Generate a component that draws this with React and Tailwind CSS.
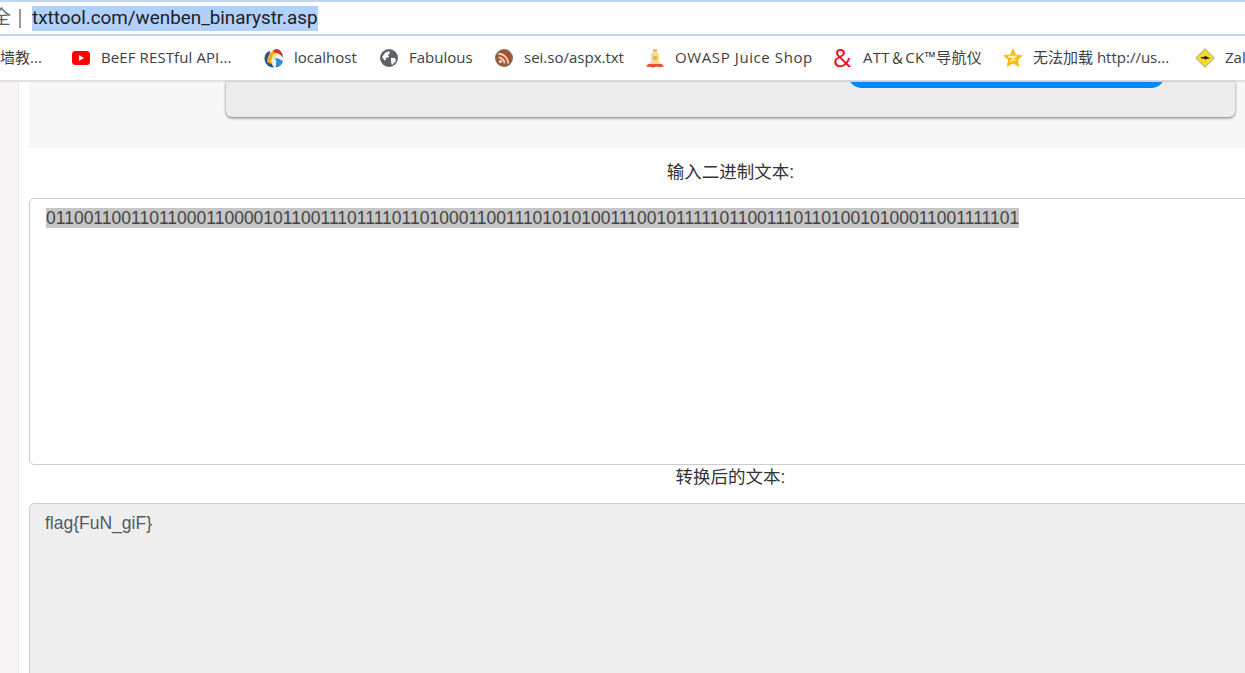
import { useMemo } from 'react'

function YoutubeIcon() {
  return (
    <svg width="18" height="14" viewBox="0 0 18 14">
      <rect width="18" height="14" rx="3.5" fill="#f00" />
      <path d="M7 4l5 3-5 3z" fill="#fff" />
    </svg>
  )
}

function SwirlIcon() {
  return (
    <svg width="20" height="20" viewBox="0 0 20 20">
      <circle cx="10" cy="10" r="9.5" fill="#eef1f4" />
      <path d="M.5 11C.5 7 2.500 4 6 3c-1 5 0 11 4 16.500-5 0-9-3.500-9.500-8.500z" fill="#23518f" />
      <path d="M3 14C3 9 6 4 10 2l2 3c-3 2-5 6-5 11z" fill="#f0a81e" />
      <path d="M9 3c1-1.500 3-2.500 5-1.800 3 1.300 5 4.800 5 8.300-2-2.500-5-4.500-7.500-4.500z" fill="#dd2f2a" />
      <path d="M8 9c0-1.500 1-3 2.500-3.500L13 8c-2 1-3 3-3 5z" fill="#f7e04a" />
      <path d="M11 10c3 0 6 1.500 8 3.500-1 3-4 6-7.500 6 1-3 1-6.500-.5-9.500z" fill="#2f8fdc" />
      <path d="M11 9.500c2.500 0 5 .8 7 2.500l.5-1.500c-2-2-4.500-3-6.500-3z" fill="#fff" />
    </svg>
  )
}

function GlobeIcon() {
  return (
    <svg width="18" height="18" viewBox="0 0 18 18">
      <circle cx="9" cy="9" r="9" fill="#5f6368" />
      <path d="M2 8l3-4 4-2 1 2-2 2 1 2-3 1-1 3-3-4zM11 9l4 0 1 3-4 4-1-3z" fill="#fff" />
    </svg>
  )
}

function RssIcon() {
  return (
    <svg width="18" height="18" viewBox="0 0 18 18">
      <circle cx="9" cy="9" r="9" fill="#7f6d55" />
      <circle cx="9" cy="9" r="7.2" fill="#ad4a28" />
      <circle cx="5.500" cy="12.500" r="1.700" fill="#ecd3b8" />
      <path d="M3.500 8.500a6 6 0 0 1 6 6M3.500 4.800a9.700 9.700 0 0 1 9.700 9.700" fill="none" stroke="#ecd3b8" strokeWidth="1.900" />
    </svg>
  )
}

function JuiceIcon() {
  return (
    <svg width="18" height="20" viewBox="0 0 18 20">
      <path d="M0 18.500c1-2 3-3 5-3h8c2 0 4 1 5 3l-5 .8-2-.8-3 1z" fill="#e2552b" />
      <path d="M5 6l2-1.500V1h4v3.500L13 6v10H5z" fill="#f5dc96" />
      <path d="M7 1h4v2.500H7z" fill="#e9bd55" />
      <path d="M7 8h4v4H7z" fill="#eab44c" />
    </svg>
  )
}

function StarIcon() {
  return (
    <svg width="20" height="20" viewBox="0 0 20 20">
      <path d="M10 0l3 6.500 7 .8-5 4.800 1.300 7L10 15.600 3.700 19 5 12.100 0 7.300l7-.8z" fill="#fdbd10" />
      <path d="M5.500 7.800h9l-4.500 3.700h4.500l-8.500 2.500 4.500-4h-5z" fill="#fff6d0" />
    </svg>
  )
}

function DiamondIcon() {
  return (
    <svg width="20" height="20" viewBox="0 0 20 20">
      <path d="M10 0l10 10-10 10L0 10z" fill="#c9c089" />
      <path d="M10 2l8 8-8 8-8-8z" fill="#f7dc1b" />
      <path d="M6 9h2.500l2-1 3 1.500 2 .5-2 .5-3 1-2-1H6z" fill="#222" />
    </svg>
  )
}

function Bookmark({ icon, label, className }) {
  return (
    <div className={`flex shrink-0 items-center ${className}`}>
      {icon}
      <span className="whitespace-nowrap">{label}</span>
    </div>
  )
}

function App() {
  const binaryText = useMemo(
    () =>
      [...'flag{FuN_giF}']
        .map((letter) => letter.charCodeAt(0).toString(2).padStart(8, '0'))
        .join(''),
    [],
  )

  return (
    <div className="flex h-[673px] w-[1245px] flex-col overflow-hidden bg-white font-['Liberation_Sans','Noto_Sans_CJK_SC',sans-serif]">
      {/* address bar */}
      <div className="flex h-9 shrink-0 items-center overflow-hidden border-y-2 border-[#bcd6f7] bg-white font-['Roboto','Noto_Sans_CJK_SC',sans-serif] text-[18.85px] text-[#202124]">
        <span className="ml-[-8px] w-[19px] shrink-0 text-[#5f6368]">全</span>
        <div className="ml-[8px] h-[19px] w-[2px] shrink-0 bg-[#9a9a9a]" />
        <span className="ml-[11px] flex h-[25px] items-center bg-[#b3d0fb] whitespace-nowrap">txttool.com/wenben_binarystr.asp</span>
      </div>

      {/* bookmarks */}
      <div className="flex h-[46px] shrink-0 items-center overflow-hidden border-b-2 border-[#dfdfe4] bg-white pb-[1px] font-['Open_Sans','Noto_Sans_CJK_SC',sans-serif] text-[15px] text-[#3c4043]">
        <Bookmark className="w-[72px]" label="墙教..." />
        <Bookmark className="w-[192px] gap-[11px] tracking-[0.1px]" icon={<YoutubeIcon />} label="BeEF RESTful API..." />
        <Bookmark className="w-[116px] gap-[10px]" icon={<SwirlIcon />} label="localhost" />
        <Bookmark className="w-[115px] gap-[11px]" icon={<GlobeIcon />} label="Fabulous" />
        <Bookmark className="w-[151px] gap-[11px]" icon={<RssIcon />} label="sei.so/aspx.txt" />
        <Bookmark className="w-[187px] gap-[11px] tracking-[0.6px]" icon={<JuiceIcon />} label="OWASP Juice Shop" />
        <Bookmark
          className="w-[170px] gap-[10px] tracking-[0.3px]"
          icon={<span className="w-[20px] text-[25px] leading-none text-[#f20d1e]">&amp;</span>}
          label="ATT＆CK™导航仪"
        />
        <Bookmark className="w-[192px] gap-[10px]" icon={<StarIcon />} label="无法加载 http://us..." />
        <Bookmark className="gap-[10px]" icon={<DiamondIcon />} label="Zalo" />
      </div>

      {/* page */}
      <div className="flex min-h-0 flex-1">
        <div className="w-[19px] shrink-0 border-r border-[#e8e6e7] bg-[#f6f4f5]" />
        <div className="ml-[10px] min-w-0 flex-1 text-[17.5px] leading-[24px]">
          <div className="h-[66px] bg-[#f7f7f7] pl-[197px] pr-[10px]">
            <div className="h-[35px] overflow-hidden rounded-b-[6px] bg-[#ececec] shadow-[0_1px_3px_rgba(0,0,0,0.55)]">
              <div className="ml-[622px] mt-[-14px] h-[20px] w-[317px] rounded-b-[14px] bg-[#0088ff]" />
            </div>
          </div>

          <div className="mt-[12px] w-[1403px] text-center text-[#333]">输入二进制文本:</div>
          <div className="mt-[14px] h-[267px] w-[1403px] rounded-[5px] border border-[#ccc] bg-white px-[16px] py-[7px] text-[#444]">
            <span className="bg-[#c6c6c6]">{binaryText}</span>
          </div>

          <div className="w-[1403px] text-center text-[#333]">转换后的文本:</div>
          <div className="mt-[14px] h-[300px] w-[1403px] rounded-[5px] border border-[#ccc] bg-[#eee] px-[15px] py-[7px] text-[#525964]">
            flag{'{'}FuN_giF{'}'}
          </div>
        </div>
      </div>
    </div>
  )
}

export default App
